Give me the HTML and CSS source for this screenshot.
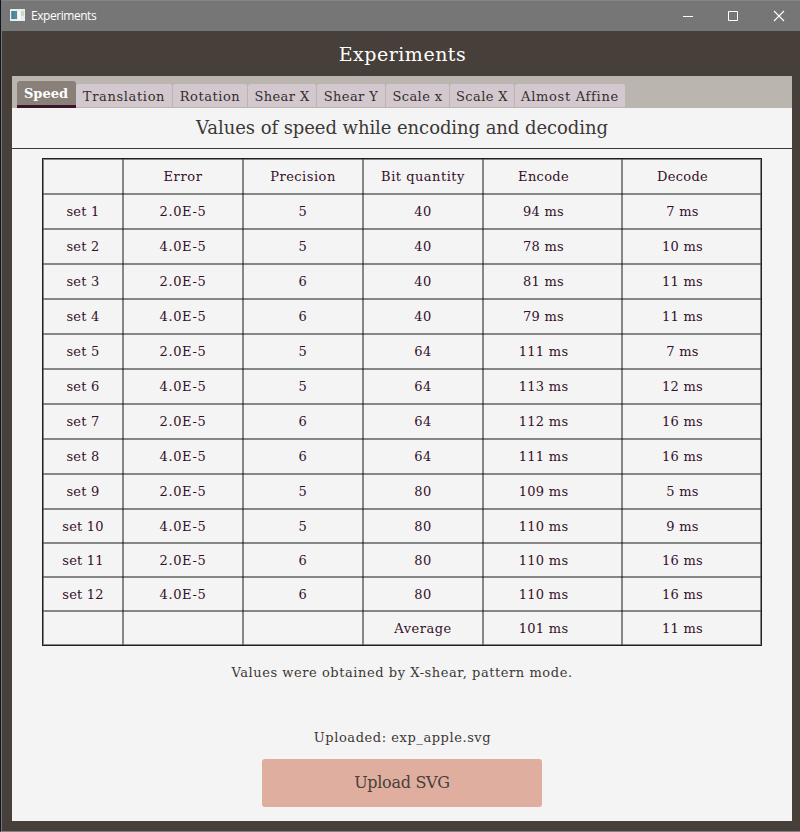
FILE: index.html
```html
<!DOCTYPE html>
<html lang="en">
<head>
<meta charset="utf-8">
<title>Experiments</title>
<link rel="stylesheet" href="styles.css">
</head>
<body>
<div class="window">
  <header class="titlebar">
    <svg class="app-icon" width="15" height="12" viewBox="0 0 15 12"><rect width="15" height="12" fill="#e9eded"/><rect x="1.5" y="2" width="5.500" height="8" fill="#4d9290"/><rect x="1.5" y="2" width="2" height="8" fill="#5277a0"/><rect x="8" y="2" width="2.500" height="9" fill="#f8f8f8"/><rect x="11" y="2" width="3" height="5" fill="#cbd9cd"/></svg>
    <span class="window-name">Experiments</span>
    <svg class="controls" width="104" height="12" viewBox="0 0 104 12"><path d="M0 6.500H10M45.500 1.500H54.500V10.500H45.500Z" fill="none" stroke="#fff"/><path d="M91 1L101 11M101 1L91 11" fill="none" stroke="#fff" stroke-width="1.1"/></svg>
  </header>
  <h1 class="banner"><span>Experiments</span></h1>
  <main class="panel">
    <nav class="tabs">
      <div class="tab active w0"><span>Speed</span></div>
      <div class="tab w1"><span>Translation</span></div>
      <div class="tab w2"><span>Rotation</span></div>
      <div class="tab w3"><span>Shear X</span></div>
      <div class="tab w4"><span>Shear Y</span></div>
      <div class="tab w5"><span>Scale x</span></div>
      <div class="tab w6"><span>Scale X</span></div>
      <div class="tab w7"><span>Almost Affine</span></div>
    </nav>
    <h2 class="heading"><span>Values of speed while encoding and decoding</span></h2>
    <div class="grid">
      <div></div><div>Error</div><div>Precision</div><div>Bit quantity</div><div>Encode</div><div>Decode</div>
      <div>set 1</div><div>2.0E-5</div><div>5</div><div>40</div><div>94 ms</div><div>7 ms</div>
      <div>set 2</div><div>4.0E-5</div><div>5</div><div>40</div><div>78 ms</div><div>10 ms</div>
      <div>set 3</div><div>2.0E-5</div><div>6</div><div>40</div><div>81 ms</div><div>11 ms</div>
      <div>set 4</div><div>4.0E-5</div><div>6</div><div>40</div><div>79 ms</div><div>11 ms</div>
      <div>set 5</div><div>2.0E-5</div><div>5</div><div>64</div><div>111 ms</div><div>7 ms</div>
      <div>set 6</div><div>4.0E-5</div><div>5</div><div>64</div><div>113 ms</div><div>12 ms</div>
      <div>set 7</div><div>2.0E-5</div><div>6</div><div>64</div><div>112 ms</div><div>16 ms</div>
      <div>set 8</div><div>4.0E-5</div><div>6</div><div>64</div><div>111 ms</div><div>16 ms</div>
      <div>set 9</div><div>2.0E-5</div><div>5</div><div>80</div><div>109 ms</div><div>5 ms</div>
      <div>set 10</div><div>4.0E-5</div><div>5</div><div>80</div><div>110 ms</div><div>9 ms</div>
      <div>set 11</div><div>2.0E-5</div><div>6</div><div>80</div><div>110 ms</div><div>16 ms</div>
      <div>set 12</div><div>4.0E-5</div><div>6</div><div>80</div><div>110 ms</div><div>16 ms</div>
      <div></div><div></div><div></div><div>Average</div><div>101 ms</div><div>11 ms</div>
    </div>
    <p class="note">Values were obtained by X-shear, pattern mode.</p>
    <p class="uploaded">Uploaded: exp_apple.svg</p>
    <button class="upload">Upload SVG</button>
  </main>
</div>
</body>
</html>
```
FILE: styles.css
```css
* { box-sizing: border-box; margin: 0; padding: 0; }
body { font-family: "DejaVu Serif", serif; font-size: 13px; color: #3c3836; }
.window { width: 800px; height: 832px; background: #473f3a; border-left: 1px solid #10151e; border-bottom: 1px solid #858483; box-shadow: inset 1px 0 #777675; overflow: hidden; }
.titlebar { height: 31px; display: flex; align-items: center; background: #767676; border-top: 1px solid #858585; padding: 0 13px 0 9px; }
.app-icon { margin-top: -2px; }
.window-name { font: 12px "Open Sans", sans-serif; color: #fff; margin: -2px 0 0 6px; letter-spacing: -.45px; }
.controls { margin: -1px 0 0 auto; }
.banner { height: 45px; display: flex; align-items: center; justify-content: center; font-size: 19px; font-weight: 400; letter-spacing: .5px; color: #fff; padding-left: 4px; }
.panel { width: 780px; height: 745px; margin-left: 11px; background: #f4f4f4; display: flex; flex-direction: column; align-items: center; }
.tabs { width: 780px; height: 32px; background: #bbb5af; display: flex; align-items: flex-end; padding-left: 5px; flex: none; }
.tab { height: 24px; background: #d3c8ce; border-right: 1px solid #bfb4b4; border-bottom: 1px solid #bbb5af; border-radius: 3px 3px 0 0; display: flex; align-items: center; justify-content: center; white-space: nowrap; color: #332e2e; padding-top: 1px; letter-spacing: .4px; }
.tab.active { height: 27px; background: #89807a; border-right: 0; border-bottom: 3px solid #3c1529; color: #fff; font-weight: 700; padding: 0 1px 0 0; letter-spacing: 0; }
.w0 { width: 59px; }
.tab.w1 { width: 97px; letter-spacing: .65px; }
.tab.w2 { width: 75px; letter-spacing: .55px; }
.w3 { width: 69px; }
.w4 { width: 69px; }
.w5 { width: 64px; }
.w6 { width: 65px; }
.tab.w7 { width: 111px; letter-spacing: .7px; }
.heading { width: 780px; height: 41px; border-bottom: 1px solid #3b3838; display: flex; align-items: center; justify-content: center; font-size: 18px; font-weight: 400; letter-spacing: -.07px; white-space: nowrap; padding-bottom: 1px; }
.grid { width: 720px; height: 488px; margin-top: 9px; display: grid; grid-template-columns: 78px repeat(3, 118px) repeat(2, 137px); grid-template-rows: repeat(10, 33px) repeat(4, 32px); gap: 2px; padding: 1px; border: 1px solid #2c2c2c; box-shadow: inset 0 0 0 1px #b4b4b4; color: #35102a; flex: none; }
.grid > div { display: flex; align-items: center; justify-content: center; letter-spacing: .5px; box-shadow: 0 0 0 2px rgba(0, 0, 0, .26); white-space: nowrap; }
.grid > div:nth-child(6n+1) { letter-spacing: .2px; }
.grid > div:nth-child(6n+2) { letter-spacing: .65px; }
.grid > div:nth-child(6n+5), .grid > div:nth-child(6n) { padding-right: 18px; letter-spacing: .3px; }
.note { margin-top: 18px; height: 18px; line-height: 18px; letter-spacing: .56px; }
.uploaded { margin-top: 47px; height: 18px; line-height: 18px; letter-spacing: .56px; padding-left: 1px; }
.upload { width: 280px; height: 48px; margin-top: 12px; border: 0; border-radius: 3px; background: #e0ae9f; font: 16px "DejaVu Serif", serif; letter-spacing: -.3px; color: #473f3a; padding-bottom: 1px; }
```
